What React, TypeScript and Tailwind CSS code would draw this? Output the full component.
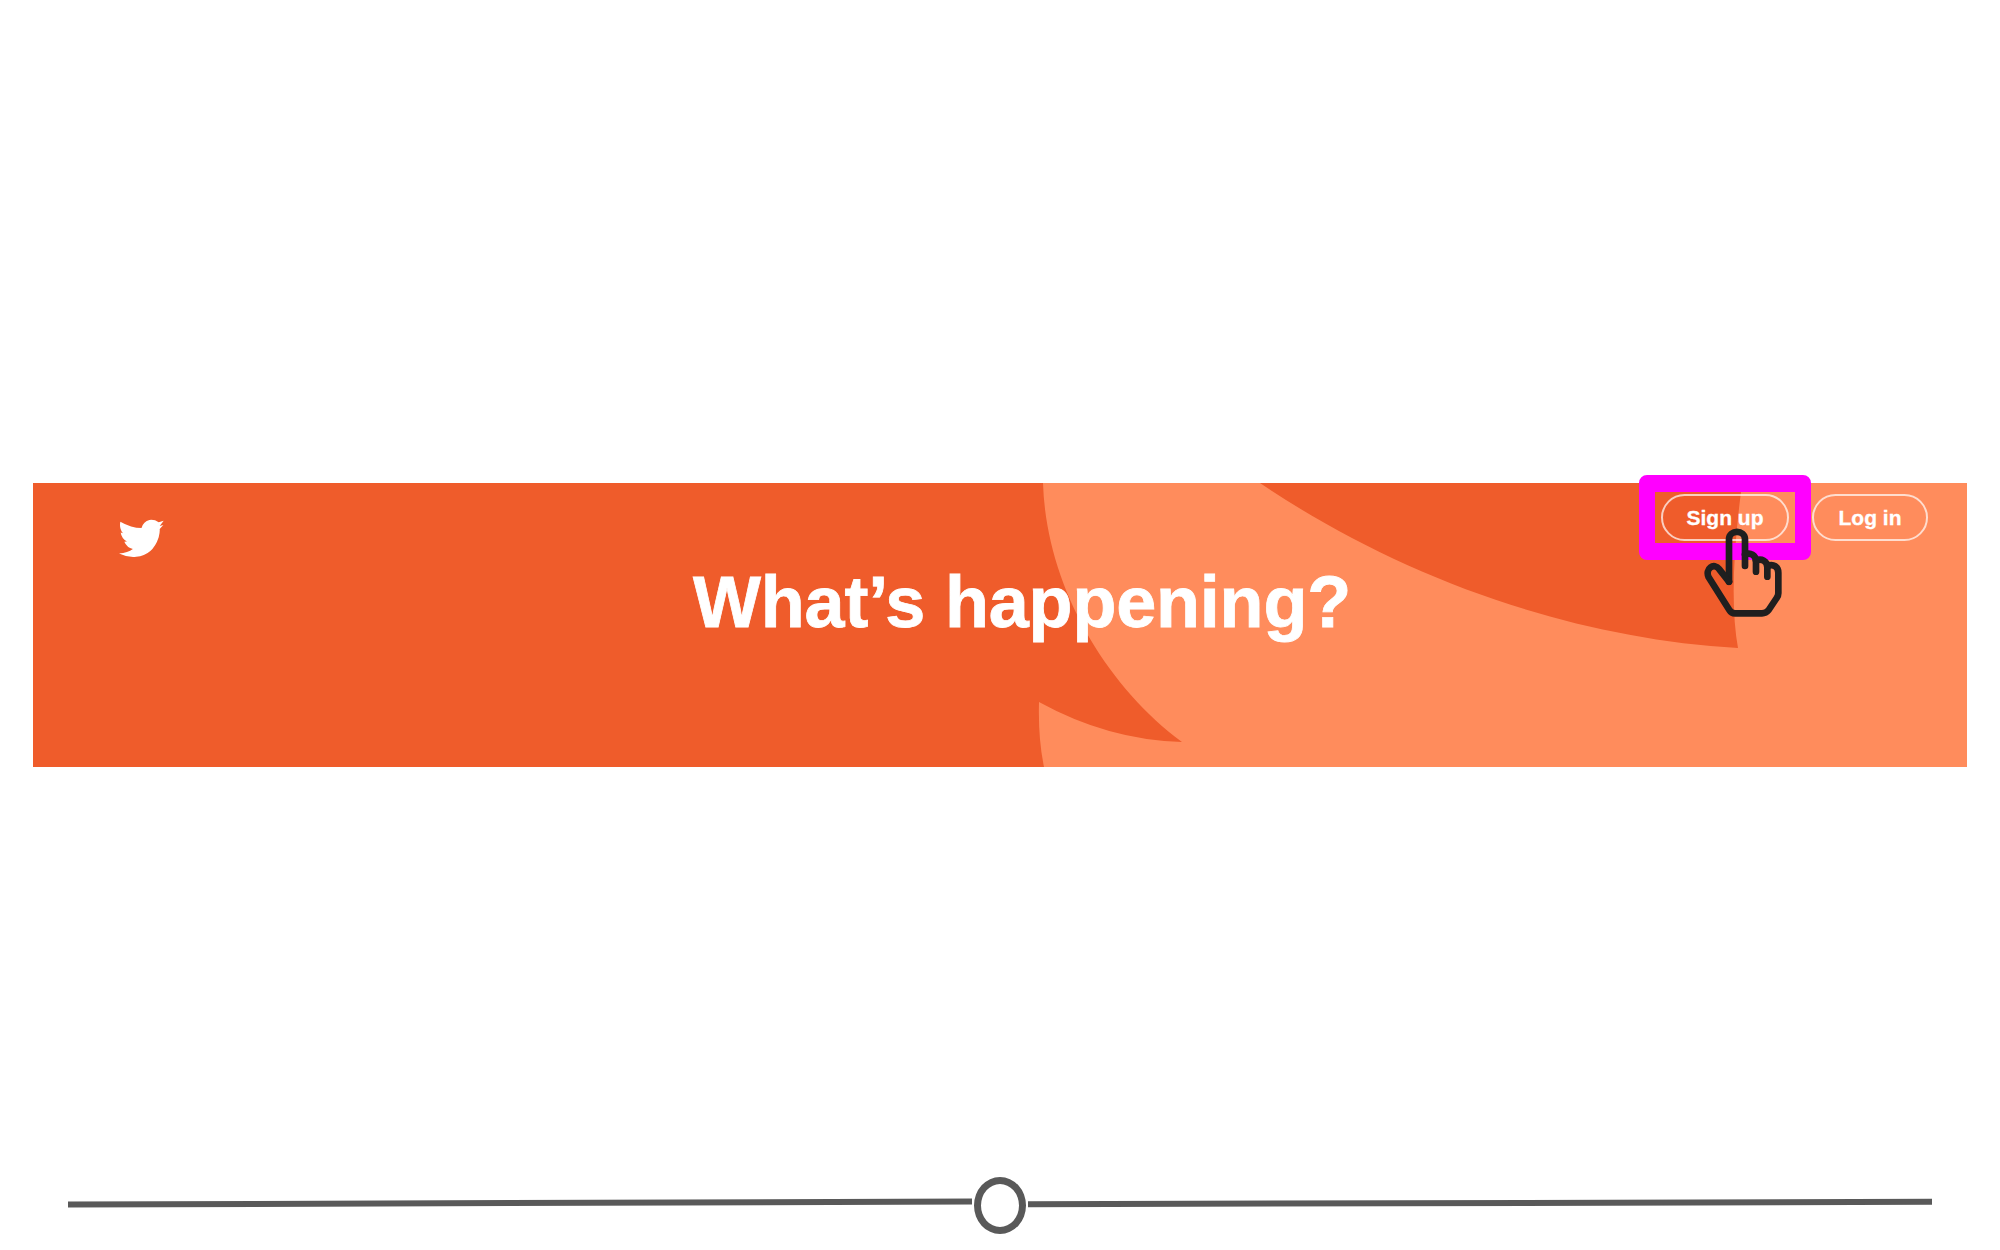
import React from 'react';

const BannerShapes = () => (
  <svg className="absolute inset-0 w-full h-full" viewBox="0 0 1934 284" preserveAspectRatio="none">
    <rect width="1934" height="284" fill="#ff8c5c" />
    <path d="M0 0H1010C1013 100 1070 200 1149 259Q1075 257 1006 219Q1005 255 1011 284H0Z" fill="#ef5c2b" />
    <path d="M1227 0C1360 90 1530 155 1705 165Q1695 110 1708 9L1716 0Z" fill="#ef5c2b" />
  </svg>
);

const Bird = () => (
  <svg className="mt-[36px] w-[45px] h-[39px]" viewBox="298 146 136 116" fill="#ffffff">
    <path d="M433 150L418 155Q405 146 390 148Q372 152 366 172Q335 172 302 153Q298 175 310 188L303 186Q306 205 322 213L314 214Q322 232 340 236Q325 248 298 249Q325 262 350 259Q400 255 418 200Q422 185 421 175L432 163L421 166Z" />
  </svg>
);

const HandCursor = () => (
  <svg
    className="absolute left-[1702px] top-[528px] w-[80px] h-[90px]"
    viewBox="306 204 240 270"
    fill="none"
    stroke="#1f1f1f"
    strokeWidth="20"
    strokeLinecap="round"
    strokeLinejoin="round"
  >
    <path d="M387 365V238C387 208 435 208 435 238V318" />
    <path d="M435 284C450 276 468 285 468 305V335" />
    <path d="M468 302C484 294 502 303 502 322V350" />
    <path d="M502 318C520 310 535 320 535 338V400Q535 408 530 414L506 450Q498 460 486 460H405Q394 460 388 450L326 352C314 326 342 306 358 328L387 365" />
  </svg>
);

const Pill = ({ label, width }: { label: string; width: string }) => (
  <button className={`${width} h-[47px] rounded-full border-2 border-white/70 flex items-center justify-center text-white font-bold text-[21px] [-webkit-text-stroke:0.3px_white]`}>
    {label}
  </button>
);

export default function App() {
  return (
    <div className="relative w-full h-[1250px] bg-white overflow-hidden font-['Liberation_Sans',Arial,sans-serif]">
      <div className="h-[483px]" />

      <div className="relative mx-[33px] h-[284px]">
        <BannerShapes />
        <div className="relative flex flex-col">
          <div className="flex justify-between h-[75px] pl-[86px] pr-[39px]">
            <Bird />
            <div className="flex gap-[23px] mt-[11px] h-[47px]">
              <Pill label="Sign up" width="w-[128px]" />
              <Pill label="Log in" width="w-[116px]" />
            </div>
          </div>
          <h1 className="mt-[8px] pl-[44px] text-center text-white font-bold text-[72px] leading-[72px] tracking-[-0.2px] [-webkit-text-stroke:0.8px_white]">
            What’s happening?
          </h1>
        </div>
      </div>

      {/* highlight box and pointer sit over the banner */}
      <div className="absolute left-[1639px] top-[475px] w-[172px] h-[85px] rounded-[8px] border-x-[16px] border-y-[17px] border-[#ff00ff]" />
      <HandCursor />

      <div className="flex items-center mt-[410px] pl-[68px] pr-[69px] h-[57px]">
        <div className="flex-1 h-[6px] mb-[6px] bg-[#595959] rotate-[-0.2deg]" />
        <div className="w-[52px] h-[57px] mx-[2px] rounded-[50%] border-[7px] border-[#595959]" />
        <div className="flex-1 h-[6px] mb-[6px] bg-[#595959] rotate-[-0.15deg]" />
      </div>
    </div>
  );
}
